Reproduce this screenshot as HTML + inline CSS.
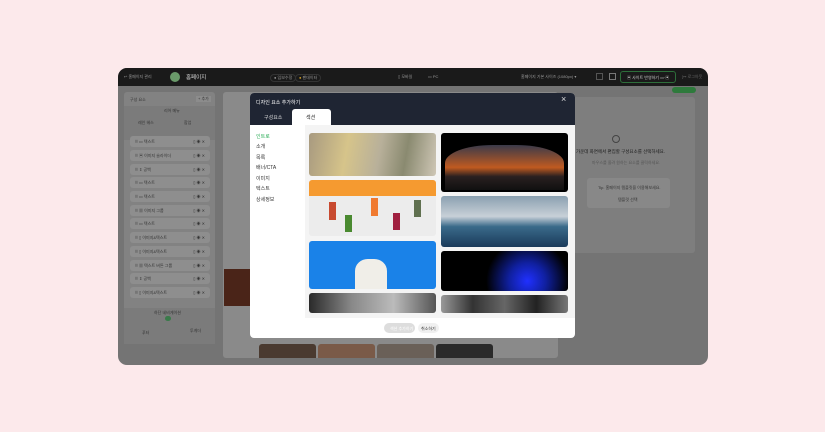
<!DOCTYPE html>
<html><head><meta charset="utf-8"><style>
*{margin:0;padding:0;box-sizing:border-box}
body{width:825px;height:432px;background:#fce9eb;font-family:"Liberation Sans","Noto Sans CJK KR",sans-serif;position:relative;overflow:hidden}
.a{position:absolute}
.app{left:118px;top:68px;width:590px;height:297px;border-radius:9px;background:#747474;overflow:hidden}
.top{left:0;top:0;width:590px;height:18px;background:#1a1a1a}
.t{font-size:4px;color:#999;white-space:nowrap}
.row{position:absolute;left:12px;width:80px;height:11px;background:#8e8e8e;border-radius:3px}
.row span{position:absolute;left:5px;top:3px;font-size:4px;color:#333}
.row i{position:absolute;right:5px;top:3px;font-size:4px;color:#333;font-style:normal}
.card{position:absolute;border-radius:3px;overflow:hidden}
</style></head><body>
<div class="a app">
 <div class="a top">
  <div class="a t" style="left:6px;top:6px">↩ 홈페이지 관리</div>
  <div class="a" style="left:52px;top:4px;width:10px;height:10px;border-radius:50%;background:#6a9a6a"></div>
  <div class="a t" style="left:68px;top:5px;font-size:5.5px;color:#ddd">홈페이지</div>
  <div class="a t" style="left:152px;top:6px;padding:0 3px;border:1px solid #333;border-radius:4px">● 임보수정</div>
  <div class="a t" style="left:177px;top:6px;padding:0 3px;border:1px solid #333;border-radius:4px"><span style="color:#d4a020">●</span> 팬데이터</div>
  <div class="a t" style="left:280px;top:6px">▯ 모바일</div>
  <div class="a t" style="left:310px;top:6px">▭ PC</div>
  <div class="a t" style="left:403px;top:6px">홈페이지 기본 사이즈 (1080px) ▾</div>
  <div class="a" style="left:478px;top:5px;width:7px;height:7px;border:1px solid #555"></div>
  <div class="a" style="left:491px;top:5px;width:7px;height:7px;border:1px solid #777"></div>
  <div class="a t" style="left:502px;top:3px;width:56px;height:12px;border:1px solid #2d6e3a;border-radius:3px;padding:3px 0 0 6px;color:#ccc">▣ 사이트 반영하기 ▭·▣</div>
  <div class="a t" style="left:564px;top:6px;color:#666">[↦ 로그아웃</div>
 </div>
 <!-- left panel -->
 <div class="a" style="left:6px;top:24px;width:91px;height:252px;background:#828282;border-radius:3px">
  <div class="a t" style="left:6px;top:5px;color:#333">구성 요소</div>
  <div class="a t" style="left:72px;top:4px;color:#333;background:#8c8c8c;padding:0 2px">+ 추가</div>
  <div class="a" style="left:0;top:14px;width:91px;height:34px;background:#7b7b7b"></div>
  <div class="a t" style="left:40px;top:16px;color:#333">리어 메뉴</div>
  <div class="a t" style="left:14px;top:28px;color:#333">레인 헤스</div>
  <div class="a t" style="left:60px;top:28px;color:#333">합업</div>
  <div class="row" style="top:44px;left:6px"><span>⠿ ▭ 텍스트</span><i>▯ ◉ ✕</i></div>
  <div class="row" style="top:58px;left:6px"><span>⠿ ▣ 이미지 슬라이더</span><i>▯ ◉ ✕</i></div>
  <div class="row" style="top:72px;left:6px"><span>⠿ ⇕ 공백</span><i>▯ ◉ ✕</i></div>
  <div class="row" style="top:85px;left:6px"><span>⠿ ▭ 텍스트</span><i>▯ ◉ ✕</i></div>
  <div class="row" style="top:99px;left:6px"><span>⠿ ▭ 텍스트</span><i>▯ ◉ ✕</i></div>
  <div class="row" style="top:113px;left:6px"><span>⠿ ▦ 이미지 그룹</span><i>▯ ◉ ✕</i></div>
  <div class="row" style="top:126px;left:6px"><span>⠿ ▭ 텍스트</span><i>▯ ◉ ✕</i></div>
  <div class="row" style="top:140px;left:6px"><span>⠿ ▯ 이미지&텍스트</span><i>▯ ◉ ✕</i></div>
  <div class="row" style="top:154px;left:6px"><span>⠿ ▯ 이미지&텍스트</span><i>▯ ◉ ✕</i></div>
  <div class="row" style="top:168px;left:6px"><span>⠿ ▦ 텍스트 버튼 그룹</span><i>▯ ◉ ✕</i></div>
  <div class="row" style="top:181px;left:6px"><span>⠿ ⇕ 공백</span><i>▯ ◉ ✕</i></div>
  <div class="row" style="top:195px;left:6px"><span>⠿ ▯ 이미지&텍스트</span><i>▯ ◉ ✕</i></div>
  <div class="a" style="left:0;top:216px;width:91px;height:36px;background:#7b7b7b"></div>
  <div class="a t" style="left:30px;top:218px;color:#333">하단 네비게이션</div>
  <div class="a" style="left:41px;top:224px;width:6px;height:5px;border-radius:3px;background:#3a7a4a"></div>
  <div class="a t" style="left:18px;top:238px;color:#333">푸터</div>
  <div class="a t" style="left:66px;top:236px;color:#333">투게더</div>
 </div>
 <!-- canvas -->
 <div class="a" style="left:105px;top:24px;width:335px;height:266px;background:#8a8a8a;border-radius:3px"></div>
 <div class="a" style="left:106px;top:201px;width:27px;height:37px;background:#4a2418"></div>
 <div class="a" style="left:141px;top:276px;width:57px;height:14px;background:#4a3a30;border-radius:3px 3px 0 0"></div>
 <div class="a" style="left:200px;top:276px;width:57px;height:14px;background:#7a5a48;border-radius:3px 3px 0 0"></div>
 <div class="a" style="left:259px;top:276px;width:57px;height:14px;background:#6a6058;border-radius:3px 3px 0 0"></div>
 <div class="a" style="left:318px;top:276px;width:57px;height:14px;background:#2a2a2a;border-radius:3px 3px 0 0"></div>
 <!-- right panel -->
 <div class="a" style="left:554px;top:19px;width:24px;height:6px;background:#2e7a3c;border-radius:3px"></div>
 <div class="a" style="left:455px;top:29px;width:122px;height:156px;background:#7e7e7e;border-radius:3px"></div>
 <div class="a" style="left:494px;top:67px;width:8px;height:8px;border:1px solid #444;border-radius:50%"></div>
 <div class="a t" style="left:458px;top:81px;font-size:4.5px;color:#1a1a1a">가운데 화면에서 편집할 구성요소를 선택하세요.</div>
 <div class="a t" style="left:474px;top:92px;color:#555">마우스를 올려 원하는 요소를 클릭하세요.</div>
 <div class="a" style="left:469px;top:110px;width:83px;height:30px;background:#888;border-radius:3px"></div>
 <div class="a t" style="left:480px;top:117px;color:#333">Tip. 홈페이지 템플릿을 이용해보세요.</div>
 <div class="a t" style="left:500px;top:129px;color:#333">템플릿 선택</div>
</div>
<!-- modal -->
<div class="a" style="left:250px;top:93px;width:325px;height:245px;background:#fff;border-radius:4px;overflow:hidden">
 <div class="a" style="left:0;top:0;width:325px;height:32px;background:#1f2533"></div>
 <div class="a t" style="left:6px;top:6px;font-size:5px;color:#fff">디자인 요소 추가하기</div>
 <div class="a" style="left:311px;top:1px;font-size:9px;color:#ddd">×</div>
 <div class="a t" style="left:14px;top:21px;font-size:5px;color:#ddd">구성요소</div>
 <div class="a" style="left:42px;top:16px;width:39px;height:16px;background:#fff;border-radius:3px 3px 0 0"></div>
 <div class="a t" style="left:56px;top:21px;font-size:5px;color:#222">섹션</div>
 <div class="a" style="left:0;top:32px;width:325px;height:193px;background:#f4f4f4"></div>
 <div class="a" style="left:0;top:32px;width:55px;height:193px;background:#fff"></div>
 <div class="a t" style="left:6px;top:40px;font-size:5px;color:#2fae5a">인트로</div>
 <div class="a t" style="left:6px;top:50px;font-size:5px;color:#333">소개</div>
 <div class="a t" style="left:6px;top:61px;font-size:5px;color:#333">목록</div>
 <div class="a t" style="left:6px;top:71px;font-size:5px;color:#333">배너/CTA</div>
 <div class="a t" style="left:6px;top:82px;font-size:5px;color:#333">이미지</div>
 <div class="a t" style="left:6px;top:92px;font-size:5px;color:#333">텍스트</div>
 <div class="a t" style="left:6px;top:103px;font-size:5px;color:#333">상세정보</div>
 <div class="card" style="left:59px;top:40px;width:127px;height:43px;background:linear-gradient(100deg,#a89a80 0%,#d6c48a 30%,#b8b09a 55%,#8a8a70 75%,#cfc7b6 100%)"></div>
 <div class="card" style="left:59px;top:87px;width:127px;height:56px;background:#ececec">
  <div class="a" style="left:0;top:0;width:127px;height:16px;background:#f59a30"></div>
  <div class="a" style="left:20px;top:22px;width:7px;height:18px;background:#c84a30"></div>
  <div class="a" style="left:62px;top:18px;width:7px;height:18px;background:#f07a30"></div>
  <div class="a" style="left:36px;top:35px;width:7px;height:17px;background:#4a8a30"></div>
  <div class="a" style="left:84px;top:33px;width:7px;height:17px;background:#a02040"></div>
  <div class="a" style="left:105px;top:20px;width:7px;height:17px;background:#607050"></div>
 </div>
 <div class="card" style="left:59px;top:148px;width:127px;height:48px;background:#1a82e8">
  <div class="a" style="left:46px;top:18px;width:32px;height:30px;background:#f0eee8;border-radius:40% 40% 0 0"></div>
 </div>
 <div class="card" style="left:59px;top:200px;width:127px;height:20px;background:linear-gradient(90deg,#2a2a2a,#888,#bbb,#555)"></div>
 <div class="card" style="left:191px;top:40px;width:127px;height:59px;background:#000">
  <div class="a" style="left:4px;top:12px;width:119px;height:45px;border-radius:40% 40% 0 0;background:linear-gradient(180deg,#3a3a4a 0%,#c05a20 50%,#2a2020 70%,#101010 100%)"></div>
 </div>
 <div class="card" style="left:191px;top:103px;width:127px;height:51px;background:linear-gradient(180deg,#8aa0b0 0%,#c8d0d8 40%,#3a6a8a 60%,#1a3a5a 100%)"></div>
 <div class="card" style="left:191px;top:158px;width:127px;height:40px;background:radial-gradient(circle at 68% 75%,#2030ff 0%,#1020a0 20%,#000 45%)"></div>
 <div class="card" style="left:191px;top:202px;width:127px;height:18px;background:linear-gradient(90deg,#999,#333,#666,#222,#777)"></div>
 <div class="a" style="left:134px;top:230px;width:31px;height:10px;background:#ddd;border-radius:5px"></div>
 <div class="a t" style="left:140px;top:233px;color:#fff">섹션 추가하기</div>
 <div class="a" style="left:168px;top:230px;width:21px;height:10px;background:#f0f0f0;border-radius:5px"></div>
 <div class="a t" style="left:171px;top:233px;color:#333">취소하기</div>
</div>
</body></html>
